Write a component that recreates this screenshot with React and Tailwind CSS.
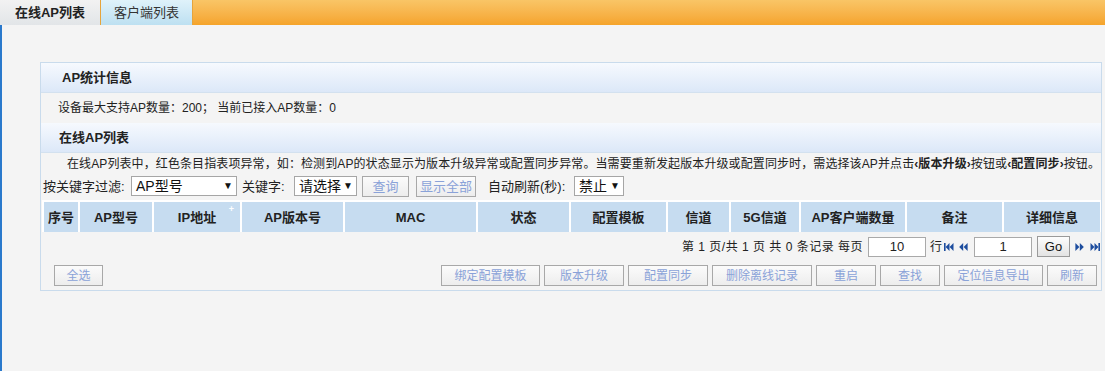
import React from "react";

const F = "font-['Liberation_Sans','Noto_Sans_CJK_SC',sans-serif]";

function Btn({ className, children }) {
  return (
    <div
      className={
        "h-[21px] flex items-center justify-center border border-[#a8a8a8] bg-gradient-to-b from-[#fbfbfb] to-[#ededed] text-[12px] leading-none text-[#8aa2d8] whitespace-nowrap " +
        className
      }
    >
      {children}
    </div>
  );
}

function Sel({ className, children }) {
  return (
    <div
      className={
        "h-[20px] flex items-center justify-between border border-[#a6a6a6] bg-white pl-[4px] pr-[3px] whitespace-nowrap " +
        className
      }
    >
      <span className="leading-none text-[#111] text-[14px] whitespace-nowrap">{children}</span>
      <span className="shrink-0 text-[10px] leading-none text-[#111]">▼</span>
    </div>
  );
}

function Tri({ dir }) {
  const c = "#1d4d9e";
  if (dir === "first")
    return (
      <svg width="10" height="8" viewBox="0 0 10 8">
        <rect x="0" y="0" width="1.6" height="8" fill={c} />
        <polygon points="5.5,0 1.6,4 5.5,8" fill={c} />
        <polygon points="9.5,0 5.6,4 9.5,8" fill={c} />
      </svg>
    );
  if (dir === "prev")
    return (
      <svg width="9" height="8" viewBox="0 0 9 8">
        <polygon points="4.2,0 0.2,4 4.2,8" fill={c} />
        <polygon points="8.6,0 4.6,4 8.6,8" fill={c} />
      </svg>
    );
  if (dir === "next")
    return (
      <svg width="9" height="8" viewBox="0 0 9 8">
        <polygon points="0.4,0 4.4,4 0.4,8" fill={c} />
        <polygon points="4.8,0 8.8,4 4.8,8" fill={c} />
      </svg>
    );
  return (
    <svg width="10" height="8" viewBox="0 0 10 8">
      <polygon points="0.5,0 4.4,4 0.5,8" fill={c} />
      <polygon points="4.5,0 8.4,4 4.5,8" fill={c} />
      <rect x="8.4" y="0" width="1.6" height="8" fill={c} />
    </svg>
  );
}

const cols = [
  ["序号", "w-[34px]"],
  ["AP型号", "w-[74px]"],
  ["IP地址", "w-[88px]"],
  ["AP版本号", "w-[103px]"],
  ["MAC", "w-[133px]"],
  ["状态", "w-[93px]"],
  ["配置模板", "w-[97px]"],
  ["信道", "w-[63px]"],
  ["5G信道", "w-[70px]"],
  ["AP客户端数量", "w-[106px]"],
  ["备注", "w-[97px]"],
  ["详细信息", "w-[98px]"],
];

export default function App() {
  return (
    <div className={"w-[1105px] h-[371px] overflow-hidden bg-[#f4f4f4] text-[#222] " + F}>
      {/* Tab bar */}
      <div className="h-[25px] flex bg-gradient-to-b from-[#f9c566] to-[#f5a42a]">
        <div className="w-[101px] h-[25px] flex items-center justify-center bg-gradient-to-b from-[#f2f2f2] to-[#e2e5e8] border-r border-[#e6a43c] text-[13px] font-bold leading-none text-[#222]">
          在线AP列表
        </div>
        <div className="w-[92px] h-[25px] flex items-center justify-center bg-gradient-to-b from-[#dff2fa] to-[#bde0f1] border-r border-[#e6a43c] text-[13px] leading-none text-[#333]">
          客户端列表
        </div>
      </div>

      {/* Body */}
      <div className="flex h-[346px]">
        <div className="w-[2px] bg-[#2a79cc]" />
        <div className="flex-1 pl-[38px] pr-[3px] pt-[37px]">
          <div className="border border-[#c9dbec] bg-[#f4f4f4]">
            {/* Header 1 */}
            <div className="h-[30px] flex items-center pl-[21px] bg-gradient-to-b from-[#f6f9fe] to-[#dce8f8] border-b border-[#d3e1ef] text-[13px] font-bold leading-none">
              AP统计信息
            </div>
            {/* Info row */}
            <div className="h-[30px] flex items-center pl-[17px] text-[12px] leading-none text-[#222]">
              设备最大支持AP数量：200； 当前已接入AP数量：0
            </div>
            {/* Header 2 */}
            <div className="h-[30px] flex items-center pl-[18px] bg-gradient-to-b from-[#f6f9fe] to-[#dce8f8] border-b border-[#d3e1ef] text-[13px] font-bold leading-none">
              在线AP列表
            </div>
            {/* Description */}
            <div className="h-[22px] flex items-center pl-[26px] text-[12px] leading-none tracking-[0.1px] text-[#222] whitespace-nowrap">
              在线AP列表中，红色条目指表项异常，如：检测到AP的状态显示为版本升级异常或配置同步异常。当需要重新发起版本升级或配置同步时，需选择该AP并点击
              <b>‹版本升级›</b>按钮或<b>‹配置同步›</b>按钮。
            </div>
            {/* Filter row */}
            <div className="h-[22px] flex items-center pl-[2px] text-[13px] leading-none text-[#222] whitespace-nowrap">
              <span className="w-[88px] shrink-0">按关键字过滤:</span>
              <Sel className="w-[106px] shrink-0">AP型号</Sel>
              <span className="ml-[5px] w-[52px] shrink-0">关键字:</span>
              <Sel className="w-[63px] shrink-0">请选择</Sel>
              <Btn className="ml-[5px] w-[47px] text-[13px] shrink-0">查询</Btn>
              <Btn className="ml-[7px] w-[60px] text-[13px] shrink-0">显示全部</Btn>
              <span className="ml-[12px] w-[86px] shrink-0">自动刷新(秒):</span>
              <Sel className="w-[50px] shrink-0">禁止</Sel>
            </div>
            {/* Table header */}
            <div className="mt-[3px] ml-[1px] bg-white pl-[2px] pt-[2px] pr-[1px] w-fit">
              <div className="flex h-[30px]">
                {cols.map(([t, w], i) => (
                  <div
                    key={t}
                    className={
                      "relative h-[30px] flex items-center justify-center bg-[#c6dcf0] text-[13px] font-bold leading-none text-[#222] " +
                      w +
                      (i > 0 ? " border-l-2 border-white" : "")
                    }
                  >
                    {t}
                    {t === "IP地址" && (
                      <span className="absolute right-[6px] top-[3px] text-[9px] leading-none text-white">+</span>
                    )}
                  </div>
                ))}
              </div>
            </div>
            {/* Pagination */}
            <div className="mt-[3px] h-[23px] flex items-center justify-end pr-[1px] text-[12px] leading-none text-[#222]">
              <span className="tracking-[0.5px]">第 1 页/共 1 页 共 0 条记录 每页</span>
              <div className="ml-[5px] w-[58px] h-[20px] border border-[#a9a9a9] bg-white flex items-center justify-center text-[13px]">10</div>
              <span className="ml-[4px]">行</span>
              <span className="ml-[2px] flex items-center"><Tri dir="first" /></span>
              <span className="ml-[5px] flex items-center"><Tri dir="prev" /></span>
              <div className="ml-[6px] w-[58px] h-[20px] border border-[#a9a9a9] bg-white flex items-center justify-center text-[13px]">1</div>
              <div className="ml-[5px] w-[33px] h-[21px] border border-[#9a9a9a] bg-gradient-to-b from-[#fdfdfd] to-[#e3e3e3] flex items-center justify-center text-[13px] text-[#111]">Go</div>
              <span className="ml-[5px] flex items-center"><Tri dir="next" /></span>
              <span className="ml-[6px] flex items-center"><Tri dir="last" /></span>
            </div>
            {/* Buttons */}
            <div className="mt-[7px] pb-[4px] flex items-center pl-[13px] pr-[4px]">
              <Btn className="w-[49px]">全选</Btn>
              <div className="flex-1" />
              <div className="flex gap-[4px]">
                <Btn className="w-[99px]">绑定配置模板</Btn>
                <Btn className="w-[80px]">版本升级</Btn>
                <Btn className="w-[80px]">配置同步</Btn>
                <Btn className="w-[100px]">删除离线记录</Btn>
                <Btn className="w-[60px]">重启</Btn>
                <Btn className="w-[60px]">查找</Btn>
                <Btn className="w-[99px]">定位信息导出</Btn>
                <Btn className="w-[50px]">刷新</Btn>
              </div>
            </div>
          </div>
        </div>
      </div>
    </div>
  );
}
